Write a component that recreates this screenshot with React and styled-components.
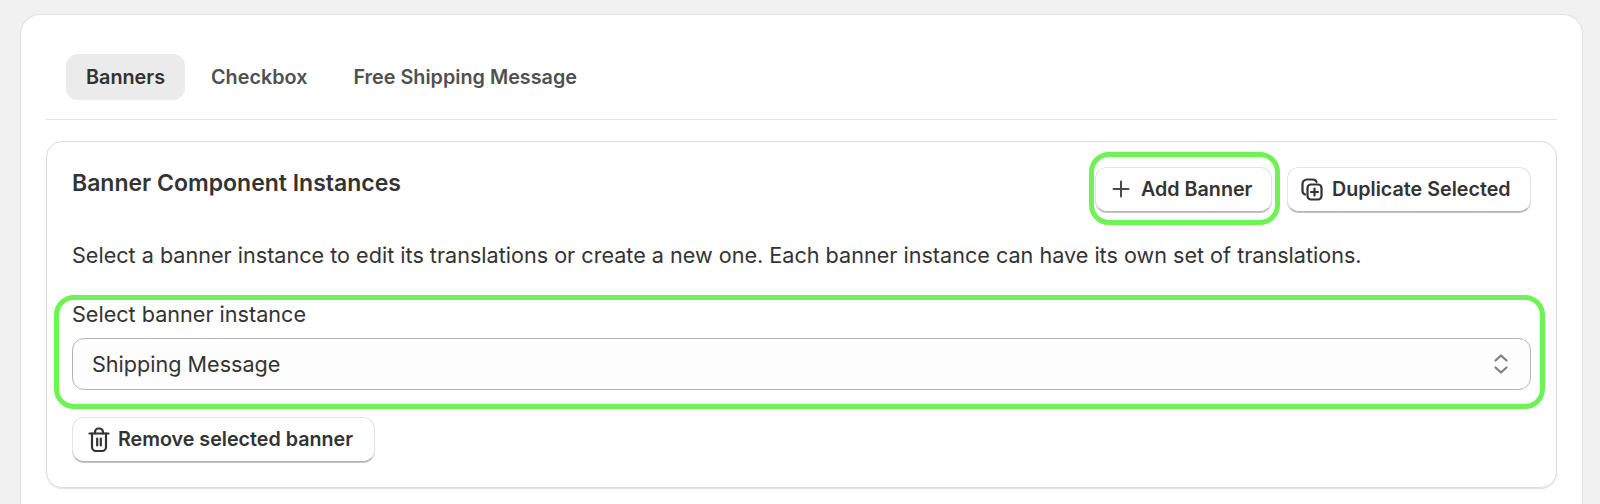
import React from "react";
import styled, { createGlobalStyle } from "styled-components";

const GlobalStyle = createGlobalStyle`
  html, body {
    margin: 0;
    background: #f1f1f1;
    height: 100%;
    overflow: hidden;
  }
  body {
    font-family: Inter, "Liberation Sans", sans-serif;
    color: #303030;
  }
`;

const Page = styled.div`
  padding: 14px 17px 0 20px;
  height: 504px;
  box-sizing: border-box;
`;

const OuterCard = styled.section`
  background: #fff;
  border: 1px solid #e0e0e0;
  border-bottom: none;
  border-radius: 20px 20px 0 0;
  height: 490px;
  box-sizing: border-box;
  padding: 39px 25px 0 25px;
`;

const TabBar = styled.div`
  display: flex;
  gap: 6px;
  padding-bottom: 19px;
  border-bottom: 1px solid #e3e3e3;
  margin-bottom: 21px;
  padding-left: 20px;
`;

const Tab = styled.button`
  height: 46px;
  padding: 0 20px;
  border: none;
  border-radius: 12px;
  background: ${(p) => (p.$active ? "#ebebeb" : "transparent")};
  color: ${(p) => (p.$active ? "#333" : "#505050")};
  font: 600 19.8px Inter, sans-serif;
`;

const InnerCard = styled.section`
  border: 1px solid #dcdcdc;
  border-radius: 16px;
  box-shadow: 0 1px 1px rgba(0, 0, 0, 0.12);
  height: 347px;
  box-sizing: border-box;
  padding: 25px 25px 0 25px;
`;

const HeaderRow = styled.div`
  display: flex;
  justify-content: space-between;
  align-items: flex-start;
`;

const Title = styled.h2`
  margin: 2px 0 0;
  font: 600 23px/28px Inter, sans-serif;
  color: #333;
`;

const Actions = styled.div`
  display: flex;
  gap: 15px;
`;

const Marked = styled.div`
  margin: -15px -8px -13px -6px;
  padding: 10px 3px 8px 1px;
  border: 5px solid #6ff253;
  border-radius: 20px;
`;

const Button = styled.button`
  display: flex;
  align-items: center;
  gap: ${(p) => p.$gap}px;
  height: 45px;
  width: ${(p) => p.$w}px;
  box-sizing: border-box;
  background: #fff;
  border: 1px solid #e3e3e3;
  border-bottom-color: #b5b5b5;
  border-radius: 12px;
  box-shadow: 0 1px 0 #c4c4c4;
  color: #333;
  font: 600 19.7px Inter, sans-serif;
  padding: 0 0 1px ${(p) => p.$pl}px;
  white-space: nowrap;
`;

const Description = styled.p`
  margin: 29px 0 0;
  font: 400 21.6px/28px Inter, sans-serif;
  color: #333;
`;

const SelectGroup = styled.div`
  margin: 26px -14px 0 -18px;
  padding: 0 9px 13.5px 13px;
  border: 5px solid #6ff253;
  border-radius: 20px;
`;

const Label = styled.label`
  display: block;
  font: 400 21.6px/28px Inter, sans-serif;
  color: #333;
  margin-bottom: 10px;
`;

const SelectBox = styled.div`
  display: flex;
  align-items: center;
  justify-content: space-between;
  height: 52px;
  box-sizing: border-box;
  padding: 0 21px 0 19px;
  background: #fdfdfd;
  border: 1px solid #b5b5b5;
  border-radius: 12px;
  font: 400 21.6px Inter, sans-serif;
  color: #333;
`;

const RemoveRow = styled.div`
  margin-top: 8.5px;
`;

const Icon = styled.svg`
  flex: none;
  display: block;
`;

const PlusIcon = () => (
  <Icon width="20" height="20" viewBox="0 0 20 20" fill="none" stroke="#4a4a4a" strokeWidth="2" strokeLinecap="round">
    <path d="M10 2.5v15M2.5 10h15" />
  </Icon>
);

const DuplicateIcon = () => (
  <Icon width="22" height="23" viewBox="0 0 22 23" fill="none" stroke="#333" strokeWidth="2.2" strokeLinecap="round" strokeLinejoin="round">
    <rect x="6.5" y="6.5" width="14" height="15" rx="3.5" />
    <path d="M4 16.5c-1.5-.5-2.5-1.8-2.5-3.5V6A4.5 4.5 0 0 1 6 1.5h6c1.6 0 3 1 3.5 2.5" />
    <path d="M13.5 10.5v7M10 14h7" />
  </Icon>
);

const TrashIcon = () => (
  <Icon width="22" height="25" viewBox="0 0 22 25" fill="none" stroke="#333" strokeWidth="2.2" strokeLinecap="round" strokeLinejoin="round">
    <path d="M1.5 6.5h19" />
    <path d="M7 6.5V5A3.5 3.5 0 0 1 10.5 1.5h1A3.5 3.5 0 0 1 15 5v1.5" />
    <path d="M4 6.5v13.500a4 4 0 0 0 4 4h6a4 4 0 0 0 4-4V6.500" />
    <path d="M9.200 11.500v7M12.800 11.500v7" />
  </Icon>
);

const ChevronsIcon = () => (
  <Icon width="16" height="22" viewBox="0 0 16 22" fill="none" stroke="#808080" strokeWidth="2.2" strokeLinecap="round" strokeLinejoin="round">
    <path d="M2.500 7.500 8 2.500l5.500 5M2.500 14.500 8 19.500l5.500-5" />
  </Icon>
);

const App = () => (
  <Page>
    <GlobalStyle />
    <OuterCard>
      <TabBar>
        <Tab $active>Banners</Tab>
        <Tab>Checkbox</Tab>
        <Tab>Free Shipping Message</Tab>
      </TabBar>
      <InnerCard>
        <HeaderRow>
          <Title>Banner Component Instances</Title>
          <Actions>
            <Marked>
              <Button $w={177} $pl={15} $gap={10}>
                <PlusIcon />
                Add Banner
              </Button>
            </Marked>
            <Button $w={244} $pl={13} $gap={9}>
              <DuplicateIcon />
              Duplicate Selected
            </Button>
          </Actions>
        </HeaderRow>
        <Description>
          Select a banner instance to edit its translations or create a new one. Each banner instance can have its own set of translations.
        </Description>
        <SelectGroup>
          <Label>Select banner instance</Label>
          <SelectBox>
            Shipping Message
            <ChevronsIcon />
          </SelectBox>
        </SelectGroup>
        <RemoveRow>
          <Button $w={303} $pl={15} $gap={8}>
            <TrashIcon />
            Remove selected banner
          </Button>
        </RemoveRow>
      </InnerCard>
    </OuterCard>
  </Page>
);

export default App;
